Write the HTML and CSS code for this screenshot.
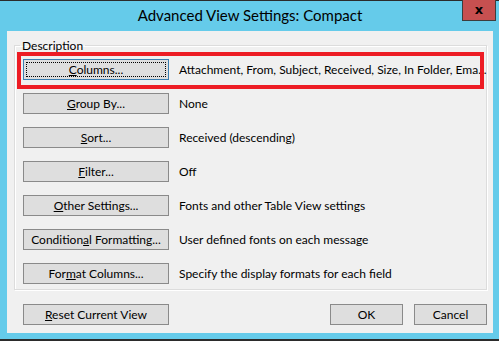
FILE: index.html
```html
<!DOCTYPE html>
<html lang="en">
<head>
    <meta charset="UTF-8">
    <title>Advanced View Settings: Compact</title>
    <link rel="stylesheet" href="styles.css">
</head>
<body>

    <div class="window">

        <!-- Title bar -->
        <div class="titlebar">
            <span></span>
            <h1>Advanced View Settings: Compact</h1>
            <button class="close">x</button>
        </div>

        <!-- Dialog body -->
        <div class="client">
            <fieldset class="group">
                <legend>Description</legend>

                <div class="row marked">
                    <button class="btn focused"><span class="focus"><u>C</u>olumns...</span></button>
                    <span class="desc">Attachment, From, Subject, Received, Size, In Folder, Ema...</span>
                </div>
                <div class="row">
                    <button class="btn"><u>G</u>roup By...</button>
                    <span class="desc">None</span>
                </div>
                <div class="row">
                    <button class="btn"><u>S</u>ort...</button>
                    <span class="desc">Received (descending)</span>
                </div>
                <div class="row">
                    <button class="btn"><u>F</u>ilter...</button>
                    <span class="desc">Off</span>
                </div>
                <div class="row">
                    <button class="btn"><u>O</u>ther Settings...</button>
                    <span class="desc">Fonts and other Table View settings</span>
                </div>
                <div class="row">
                    <button class="btn">Condition<u>a</u>l Formatting...</button>
                    <span class="desc">User defined fonts on each message</span>
                </div>
                <div class="row">
                    <button class="btn">For<u>m</u>at Columns...</button>
                    <span class="desc">Specify the display formats for each field</span>
                </div>
            </fieldset>

            <div class="footer">
                <button class="btn"><u>R</u>eset Current View</button>
                <div class="actions">
                    <button class="btn small">OK</button>
                    <button class="btn small">Cancel</button>
                </div>
            </div>
        </div>

    </div>

</body>
</html>
```

FILE: styles.css
```css
body {
    margin: 0;
    padding: 0;
    font-family: Lato, "Noto Sans", sans-serif;
    font-size: 12px;
    color: #000;
    background: #65cbea;
    overflow: hidden;
}

.window {
    width: 500px;
    height: 341px;
    box-sizing: border-box;
    background: #65cbea;
    border-top: 1px solid #2b2b2b;
    border-bottom: 2px solid #2b2b2b;
}

.titlebar {
    display: grid;
    grid-template-columns: 1fr auto 1fr;
    height: 30px;
}

.titlebar h1 {
    margin: 0;
    font-size: 15px;
    font-weight: normal;
    line-height: 28px;
    color: #000;
}

.close {
    justify-self: end;
    align-self: start;
    width: 34px;
    height: 21px;
    margin: -1px 4px 0 0;
    padding: 0;
    background: #c75050;
    border: 1px solid #3d3d3d;
    border-top: none;
    font-family: "DejaVu Sans", sans-serif;
    font-size: 13px;
    font-weight: bold;
    line-height: 16px;
    color: #000;
}

.client {
    margin: 0 7px 0 7px;
    height: 302px;
    box-sizing: border-box;
    padding: 7px 6px 0 7px;
    background: #f0f0f0;
}

.group {
    margin: 0;
    padding: 6px 8px 5px 8px;
    border: 1px solid #dcdcdc;
    box-shadow: inset 1px 1px 0 #fff, 1px 1px 0 #fff;
    display: flex;
    flex-direction: column;
    gap: 13px;
    min-width: 0;
}

.group legend {
    padding: 0 2px;
    margin-left: -3px;
    line-height: 15px;
}

.row {
    display: flex;
    align-items: center;
    gap: 10px;
}

.row.marked {
    position: relative;
}

/* red annotation box */
.row.marked::after {
    content: "";
    position: absolute;
    left: -6px;
    right: -6px;
    top: -7px;
    bottom: -9px;
    border: 4px solid #ed1c24;
}

.btn {
    flex-shrink: 0;
    width: 146px;
    height: 21px;
    padding: 0;
    background: #dedede;
    border: 1px solid #8a8a8a;
    font-family: inherit;
    font-size: 12px;
    color: #000;
    line-height: 17px;
}

.btn.focused {
    border-color: #3c7fb1;
    padding: 2px;
}

.btn .focus {
    display: block;
    height: 100%;
    box-sizing: border-box;
    border: 1px dotted #000;
    line-height: 13px;
}

.btn.small {
    width: 73px;
}

.desc {
    white-space: nowrap;
}

.footer {
    display: flex;
    justify-content: space-between;
    margin-top: 14px;
    padding-left: 9px;
}

.actions {
    display: flex;
    gap: 11px;
}
```
